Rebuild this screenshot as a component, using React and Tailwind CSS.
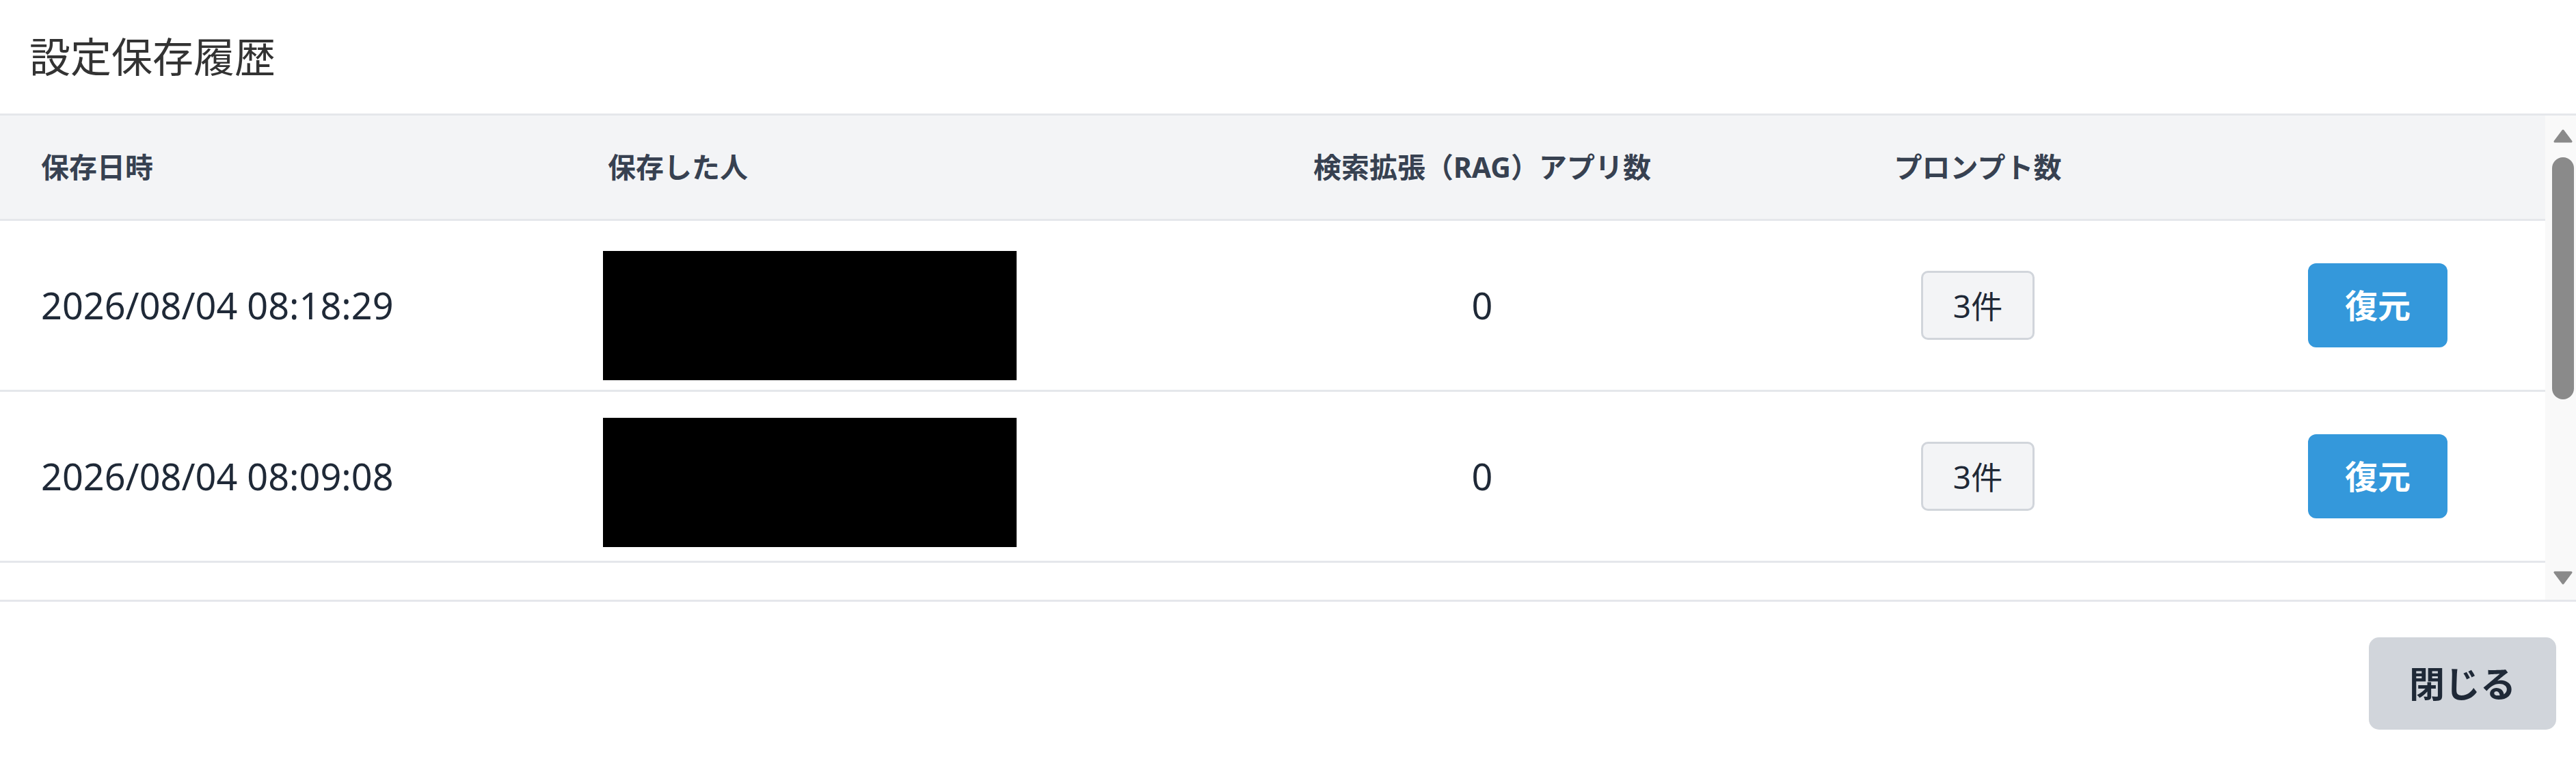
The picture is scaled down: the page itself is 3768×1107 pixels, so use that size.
import React from 'react';

const rows = [
  { savedAt: '2026/08/04 08:18:29', ragApps: 0, prompts: 3, boxPad: 'pt-[30px]' },
  { savedAt: '2026/08/04 08:09:08', ragApps: 0, prompts: 3, boxPad: 'pt-[18px]' },
];

const cols = 'grid grid-cols-[829px_948px_782px_668px_502px]';

function Scrollbar() {
  return (
    <div className="w-[45px] bg-[#f9f9f9] flex flex-col items-center pl-[7px] pt-[20px] pb-[22px]">
      <svg width="28" height="20" viewBox="0 0 28 20">
        <path d="M14 2 L26 18 L2 18 Z" fill="#8a8a8a" stroke="#8a8a8a" strokeWidth="3" strokeLinejoin="round" />
      </svg>
      <div className="mt-[21px] w-[32px] h-[354px] rounded-full bg-[#8a8a8a]" />
      <div className="flex-1" />
      <svg width="28" height="20" viewBox="0 0 28 20">
        <path d="M2 2 L26 2 L14 18 Z" fill="#8a8a8a" stroke="#8a8a8a" strokeWidth="3" strokeLinejoin="round" />
      </svg>
    </div>
  );
}

export default function App() {
  return (
    <div className="w-[3768px] h-[1107px] overflow-hidden bg-white font-['Noto_Sans','Noto_Sans_CJK_JP',sans-serif]">
      <div className="h-[166px] flex items-center pl-[43px]">
        <h2 className="text-[60px] text-[#333333] leading-none">設定保存履歴</h2>
      </div>

      <div className="h-[714px] flex border-y-[3px] border-[#e5e7eb]">
        <div className="flex-1 overflow-hidden">
          {/* header */}
          <div className={`${cols} h-[154px] bg-[#f3f4f6] border-b-[3px] border-[#e5e7eb] items-center text-[41px] font-bold text-[#374151]`}>
            <div className="pl-[60px]">保存日時</div>
            <div className="pl-[60px]">保存した人</div>
            <div className="text-center">検索拡張（RAG）アプリ数</div>
            <div className="text-center">プロンプト数</div>
            <div />
          </div>

          {rows.map((r) => (
            <div key={r.savedAt} className={`${cols} h-[250px] border-b-[3px] border-[#e5e7eb] items-center text-[54px] text-[#1f2937]`}>
              <div className="pl-[60px]">{r.savedAt}</div>
              <div className={`pl-[53px] ${r.boxPad}`}>
                <div className="w-[605px] h-[189px] bg-black" />
              </div>
              <div className="text-center">{r.ragApps}</div>
              <div className="flex justify-center">
                <button className="w-[166px] h-[101px] rounded-[10px] border-[3px] border-[#d1d5db] bg-[#f3f4f6] text-[46px] text-[#1f2937] leading-none">
                  {r.prompts}件
                </button>
              </div>
              <div className="flex justify-center">
                <button className="w-[204px] h-[123px] rounded-[12px] bg-[#3498db] text-white text-[48px] font-bold leading-none">
                  復元
                </button>
              </div>
            </div>
          ))}
        </div>
        <Scrollbar />
      </div>

      <div className="flex justify-end pr-[29px] pt-[52px]">
        <button className="w-[274px] h-[135px] rounded-[15px] bg-[#d1d5db] text-[52px] font-bold text-[#1f2937] leading-none">
          閉じる
        </button>
      </div>
    </div>
  );
}
